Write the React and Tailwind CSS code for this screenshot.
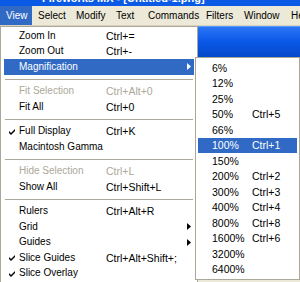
import React from "react";

const mainItems = [
  { label: "Zoom In", sc: "Ctrl+=" },
  { label: "Zoom Out", sc: "Ctrl+-" },
  { label: "Magnification", sub: true, active: true },
  "sep",
  { label: "Fit Selection", sc: "Ctrl+Alt+0", disabled: true },
  { label: "Fit All", sc: "Ctrl+0" },
  "sep",
  { label: "Full Display", sc: "Ctrl+K", checked: true },
  { label: "Macintosh Gamma" },
  "sep",
  { label: "Hide Selection", sc: "Ctrl+L", disabled: true },
  { label: "Show All", sc: "Ctrl+Shift+L" },
  "sep",
  { label: "Rulers", sc: "Ctrl+Alt+R" },
  { label: "Grid", sub: true },
  { label: "Guides", sub: true },
  { label: "Slice Guides", sc: "Ctrl+Alt+Shift+;", checked: true },
  { label: "Slice Overlay", checked: true },
];

const zoomItems = [
  { label: "6%" },
  { label: "12%" },
  { label: "25%" },
  { label: "50%", sc: "Ctrl+5" },
  { label: "66%" },
  { label: "100%", sc: "Ctrl+1", active: true },
  { label: "150%" },
  { label: "200%", sc: "Ctrl+2" },
  { label: "300%", sc: "Ctrl+3" },
  { label: "400%", sc: "Ctrl+4" },
  { label: "800%", sc: "Ctrl+8" },
  { label: "1600%", sc: "Ctrl+6" },
  { label: "3200%" },
  { label: "6400%" },
];

const menubar = [
  { label: "View", w: "w-[32px]", active: true },
  { label: "Select", w: "w-[38px]" },
  { label: "Modify", w: "w-[40px]" },
  { label: "Text", w: "w-[32px]" },
  { label: "Commands", w: "w-[58px]" },
  { label: "Filters", w: "w-[38px]" },
  { label: "Window", w: "w-[47px]" },
  { label: "Help", w: "w-[40px]" },
];

const Check = ({ color }) => (
  <svg width="7" height="7" viewBox="0 0 7 7">
    <path d="M0 3 L2 5 L6 1 L6 3 L2 7 L0 5 Z" fill={color} />
  </svg>
);

const Arrow = ({ color }) => (
  <svg width="4" height="7" viewBox="0 0 4 7">
    <path d="M0 0 L4 3.5 L0 7 Z" fill={color} />
  </svg>
);

const MainRow = ({ item }) => {
  if (item === "sep") {
    return (
      <div className="h-[9px] flex items-center px-px">
        <div className="h-px w-full bg-[#aca899]" />
      </div>
    );
  }
  const fg = item.active ? "text-white" : item.disabled ? "text-[#aca899]" : "text-black";
  return (
    <div className={`h-[15.5px] flex items-center ${item.active ? "bg-[#316ac5]" : ""} ${fg}`}>
      <div className="w-[15px] flex justify-center pl-px">
        {item.checked && <Check color={item.active ? "#fff" : "#000"} />}
      </div>
      <div className="w-[87px] whitespace-nowrap">{item.label}</div>
      <div className="flex-1 whitespace-nowrap text-[10.5px]">{item.sc}</div>
      {item.sub && (
        <div className="mr-[3px] flex items-center">
          <Arrow color={item.active ? "#fff" : "#000"} />
        </div>
      )}
    </div>
  );
};

const ZoomRow = ({ item }) => (
  <div
    className={`h-[15.5px] flex items-center pl-[14px] text-[10.5px] ${
      item.active ? "bg-[#316ac5] text-white" : "text-black"
    }`}
  >
    <div className="w-[40px] whitespace-nowrap">{item.label}</div>
    <div className="whitespace-nowrap">{item.sc}</div>
  </div>
);

export default function App() {
  return (
    <div
      className="relative w-[300px] h-[282px] overflow-hidden bg-[#ece9d8] text-[10px] leading-none"
      style={{ fontFamily: '"Liberation Sans", Arial, sans-serif' }}
    >
      <div className="h-[6px] overflow-hidden bg-[#0a5ae6]">
        <div className="-mt-[8px] pl-[42px] text-[11px] font-bold text-white whitespace-nowrap leading-[13px]">
          Fireworks MX - [Untitled-1.png]
        </div>
      </div>

      <div className="h-[20px] flex items-stretch bg-[#ece9d8] border-b border-[#d8d2bd]">
        {menubar.map((m) => (
          <div
            key={m.label}
            className={`${m.w} shrink-0 flex items-center pl-[6px] whitespace-nowrap ${
              m.active ? "bg-[#316ac5] text-white" : "text-black"
            }`}
          >
            {m.label}
          </div>
        ))}
      </div>

      <div className="h-[31px] bg-gradient-to-b from-[#2a74f5] via-[#0a58e8] to-[#0648c8] border-t border-[#5b9bff]" />

      <div className="absolute left-0 top-[26px] w-[198px] h-[270px] bg-white border border-[#aca899] px-[3px] py-[1px]">
        {mainItems.map((it, i) => (
          <MainRow key={i} item={it} />
        ))}
      </div>

      <div className="absolute left-[195px] top-[57px] w-[105px] bg-white border border-[#aca899] px-[2px] py-[2px]">
        {zoomItems.map((it) => (
          <ZoomRow key={it.label} item={it} />
        ))}
      </div>
    </div>
  );
}
